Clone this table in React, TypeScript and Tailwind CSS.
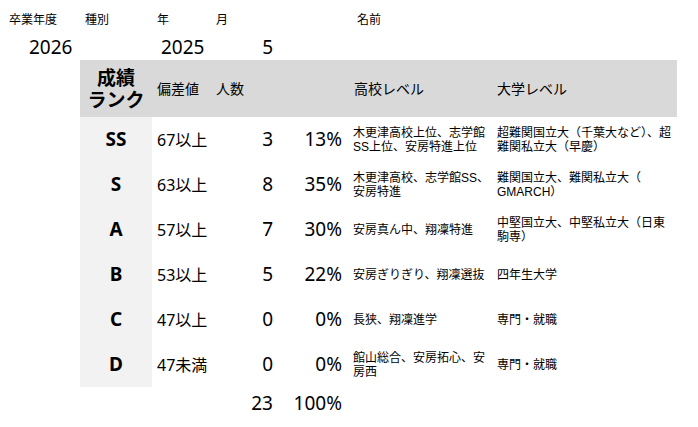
import React from "react";

type Row = {
  rank: string;
  score: string;
  count: number;
  pct: string;
  school: string[];
  univ: string[];
};

const ROWS: Row[] = [
  { rank: "SS", score: "67以上", count: 3, pct: "13%", school: ["木更津高校上位、志学館", "SS上位、安房特進上位"], univ: ["超難関国立大（千葉大など）、超", "難関私立大（早慶）"] },
  { rank: "S", score: "63以上", count: 8, pct: "35%", school: ["木更津高校、志学館SS、", "安房特進"], univ: ["難関国立大、難関私立大（", "GMARCH）"] },
  { rank: "A", score: "57以上", count: 7, pct: "30%", school: ["安房真ん中、翔凜特進"], univ: ["中堅国立大、中堅私立大（日東", "駒専）"] },
  { rank: "B", score: "53以上", count: 5, pct: "22%", school: ["安房ぎりぎり、翔凜選抜"], univ: ["四年生大学"] },
  { rank: "C", score: "47以上", count: 0, pct: "0%", school: ["長狭、翔凜進学"], univ: ["専門・就職"] },
  { rank: "D", score: "47未満", count: 0, pct: "0%", school: ["館山総合、安房拓心、安", "房西"], univ: ["専門・就職"] },
];

const cols = "grid grid-cols-[80px_72px_59px_66px_69px_144px_187px]";
const num = "flex items-center justify-end pr-[4px] text-[19px]";
const small = "font-['Liberation_Sans','Noto_Sans_CJK_JP',sans-serif] text-[12px] leading-[14px]";

function Lines({ lines }: { lines: string[] }) {
  return (
    <div className="whitespace-nowrap">
      {lines.map((l) => (
        <div key={l}>{l}</div>
      ))}
    </div>
  );
}

export default function App() {
  return (
    <div className="h-[427px] w-[698px] bg-white font-['Noto_Sans','Noto_Sans_CJK_JP',sans-serif] text-black">
      {/* meta labels */}
      <div className={`${cols} h-[33px] text-[12px] leading-[17px]`}>
        <div className="pl-[9px] pt-[11px]">卒業年度</div>
        <div className="pl-[5px] pt-[11px]">種別</div>
        <div className="pl-[5px] pt-[11px]">年</div>
        <div className="pl-[5px] pt-[11px]">月</div>
        <div />
        <div className="pl-[11px] pt-[11px]">名前</div>
        <div />
      </div>
      <div className={`${cols} h-[27px] text-[19px]`}>
        <div className="flex items-center pl-[29px]">2026</div>
        <div />
        <div className="flex items-center pl-[9px]">2025</div>
        <div className={num}>5</div>
        <div />
        <div />
        <div />
      </div>

      {/* header */}
      <div className={`${cols} h-[57px]`}>
        <div />
        <div className="flex flex-col items-center justify-center bg-[#d9d9d9] text-[19px] font-bold leading-[22px]">
          <span>成績</span>
          <span>ランク</span>
        </div>
        <div className="flex items-center bg-[#d9d9d9] pl-[5px] text-[14px]">偏差値</div>
        <div className="flex items-center bg-[#d9d9d9] pl-[5px] text-[14px]">人数</div>
        <div className="bg-[#d9d9d9]" />
        <div className="flex items-center bg-[#d9d9d9] pl-[8px] text-[14px]">高校レベル</div>
        <div className="flex items-center bg-[#d9d9d9] pl-[7px] text-[14px]">大学レベル</div>
      </div>

      {ROWS.map((r) => (
        <div key={r.rank} className={`${cols} h-[45px]`}>
          <div />
          <div className="flex items-center justify-center bg-[#f2f2f2] text-[19px] font-bold">{r.rank}</div>
          <div className="flex items-center pl-[5px] text-[16px]">{r.score}</div>
          <div className={num}>{r.count}</div>
          <div className={num}>{r.pct}</div>
          <div className={`flex items-center pl-[7px] ${small}`}>
            <Lines lines={r.school} />
          </div>
          <div className={`flex items-center pl-[7px] ${small}`}>
            <Lines lines={r.univ} />
          </div>
        </div>
      ))}

      {/* total */}
      <div className={`${cols} h-[33px]`}>
        <div />
        <div />
        <div />
        <div className={num}>23</div>
        <div className={num}>100%</div>
        <div />
        <div />
      </div>
    </div>
  );
}
